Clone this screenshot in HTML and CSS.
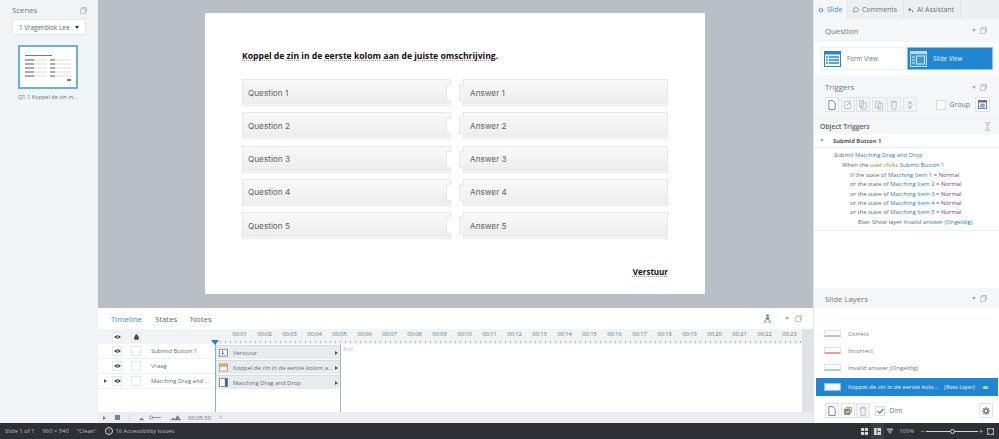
FILE: index.html
```html
<!DOCTYPE html>
<html lang="nl">
<head>
<meta charset="utf-8">
<title>Slide</title>
<link rel="stylesheet" href="styles.css">
</head>
<body>
<div class="app">
  <aside class="scenes">
    <div class="scenes-head"><span>Scenes</span>
      <svg class="dock" viewBox="0 0 9 9"><path d="M2.500 2V.5h6v5H7M.5 2.500h6.500v6h-6.500z" fill="none" stroke="#a9b1b8"/></svg>
    </div>
    <div class="scene-select"><span class="scene-name">1 Vragenblok Lee</span><span class="caret-d"></span></div>
    <div class="thumb">
      <div class="thumb-title"></div>
      <div class="thumb-row"></div><div class="thumb-row"></div><div class="thumb-row"></div><div class="thumb-row"></div><div class="thumb-row"></div>
      <div class="thumb-btn"></div>
    </div>
    <div class="thumb-label">Q1.1 Koppel de zin in...</div>
  </aside>

  <main class="center">
    <div class="stage">
      <section class="slide">
        <h1 class="q-title"><span class="sp">Koppel</span> de <span class="sp">zin</span> in de <span class="sp">eerste</span> <span class="sp">kolom</span> <span class="sp">aan</span> de <span class="sp">juiste</span> <span class="sp">omschrijving</span>.</h1>
        <div class="pairs">
          <div class="pair"><div class="q">Question 1<i class="notch"></i></div><div class="a"><i class="tab"></i>Answer 1</div></div>
          <div class="pair"><div class="q">Question 2<i class="notch"></i></div><div class="a"><i class="tab"></i>Answer 2</div></div>
          <div class="pair"><div class="q">Question 3<i class="notch"></i></div><div class="a"><i class="tab"></i>Answer 3</div></div>
          <div class="pair"><div class="q">Question 4<i class="notch"></i></div><div class="a"><i class="tab"></i>Answer 4</div></div>
          <div class="pair"><div class="q">Question 5<i class="notch"></i></div><div class="a"><i class="tab"></i>Answer 5</div></div>
        </div>
        <div class="submit"><span class="sp">Verstuur</span></div>
      </section>
    </div>

    <section class="timeline">
      <div class="tl-tabs">
        <span class="tl-tab on">Timeline</span><span class="tl-tab">States</span><span class="tl-tab">Notes</span>
        <span class="tl-tools">
          <svg class="person" viewBox="0 0 8 10"><circle cx="4" cy="1.500" r="1.500" fill="#3b86c4"/><path d="M2 3.500h4v3H2z" fill="#6d8ba6"/><path d="M0 7h3v3H0zM5 7h3v3H5z" fill="#b4bbc2"/></svg>
          <i class="caret-s"></i>
          <svg class="dock" viewBox="0 0 9 9"><path d="M2.500 2V.5h6v5H7M.5 2.500h6.500v6h-6.500z" fill="none" stroke="#a9b1b8"/></svg>
        </span>
      </div>
      <div class="ruler-row">
        <div class="ruler-left">
          <span class="ck eye"><svg viewBox="0 0 10 8"><path d="M0 4q5-5 10 0q-5 5-10 0z" fill="#444c54"/><circle cx="5" cy="4" r="1.200" fill="#fff"/></svg></span>
          <span class="ck eye"><svg viewBox="0 0 10 10"><path d="M3 4.500V3a2 2 0 0 1 4 0v1.500M1.500 4.500h7V9h-7z" fill="#444c54" stroke="#444c54"/></svg></span>
        </div>
        <div class="ruler" id="ruler"><i class="playhead"></i></div>
        <div class="sb-top"></div>
      </div>
      <div class="tl-body">
        <div class="tl-rows">
          <div class="tl-row">
            <div class="tl-left"><i class="expander"></i><span class="ck eye"><svg viewBox="0 0 10 8"><path d="M0 4q5-5 10 0q-5 5-10 0z" fill="#444c54"/><circle cx="5" cy="4" r="1.200" fill="#fff"/></svg></span><span class="ck"></span><span class="name">Submid Button 1</span></div>
            <div class="bar"><svg class="bar-ico" viewBox="0 0 10 10"><rect x=".5" y="1.500" width="9" height="7.500" fill="#f8f9fa" stroke="#7c8a96"/><path d="M4 3v4l1-1 1 1" fill="none" stroke="#336fa8"/></svg>Verstuur<i class="bar-arrow"></i></div>
          </div>
          <div class="tl-row">
            <div class="tl-left"><i class="expander"></i><span class="ck eye"><svg viewBox="0 0 10 8"><path d="M0 4q5-5 10 0q-5 5-10 0z" fill="#444c54"/><circle cx="5" cy="4" r="1.200" fill="#fff"/></svg></span><span class="ck"></span><span class="name">Vraag</span></div>
            <div class="bar"><svg class="bar-ico" viewBox="0 0 10 10"><rect x=".5" y="1" width="9" height="8" fill="#f9f4e8" stroke="#9aa0a6"/><path d="M1 1.500h8V4H1z" fill="#ee9b45"/></svg>Koppel de zin in de eerste kolom a...<i class="bar-arrow"></i></div>
          </div>
          <div class="tl-row">
            <div class="tl-left"><i class="expander show"></i><span class="ck eye"><svg viewBox="0 0 10 8"><path d="M0 4q5-5 10 0q-5 5-10 0z" fill="#444c54"/><circle cx="5" cy="4" r="1.200" fill="#fff"/></svg></span><span class="ck"></span><span class="name">Matching Drag and ...</span></div>
            <div class="bar"><svg class="bar-ico" viewBox="0 0 10 10"><rect x=".5" y=".5" width="9" height="9" fill="#fff" stroke="#7c8a96"/><path d="M6.500 .5h3v9h-3z" fill="#2f6fa8"/></svg>Matching Drag and Drop<i class="bar-arrow"></i></div>
          </div>
          <span class="end">End</span>
          <i class="line-start"></i><i class="line-end"></i>
        </div>
        <div class="sb"></div>
      </div>
      <div class="tl-foot">
        <div class="foot-left">
          <i class="play"></i><i class="stop"></i><i class="sep"></i>
          <svg class="zoom-ico" viewBox="0 0 48 8"><path d="M0 7l3-3 3 3zM36 7l3-3 2 2 3-5 4 6z" fill="#79828b"/><circle cx="14" cy="4" r="1.800" fill="#fff" stroke="#79828b"/><path d="M16 4h9" stroke="#79828b"/></svg>
          <span class="time">00:05.00</span>
        </div>
        <div class="foot-right"><i class="left-arrow"></i></div>
      </div>
    </section>
  </main>

  <aside class="props">
    <div class="prop-tabs">
      <span class="ptab on"><svg viewBox="0 0 10 10"><circle cx="5" cy="5" r="2.800" fill="none" stroke="#2f8fd4" stroke-width="2" stroke-dasharray="2 .7"/></svg>Slide</span>
      <span class="ptab com"><svg viewBox="0 0 10 10"><path d="M1 4.500a4 3.500 0 1 1 2 3L1 9z" fill="none" stroke="#5d666e"/></svg>Comments</span>
      <span class="ptab ai"><svg viewBox="0 0 10 10"><path d="M3 1l1 2.500L6 4.500 4 5.500 3 8 2 5.500 0 4.500 2 3.500zM8 5l.6 1.400L10 7l-1.400.6L8 9l-.6-1.400L6 7l1.400-.6z" fill="#5d666e"/></svg>AI Assistant</span>
      <span class="ptab-rest"></span>
    </div>
    <div class="panel-head q-head"><span>Question</span><span class="head-tools"><i class="caret-s"></i><svg class="dock" viewBox="0 0 9 9"><path d="M2.500 2V.5h6v5H7M.5 2.500h6.500v6h-6.500z" fill="none" stroke="#a9b1b8"/></svg></span></div>
    <div class="views">
      <div class="view form">
        <svg viewBox="0 0 17 16"><rect x=".5" y=".5" width="16" height="15" fill="#fff" stroke="#1f86d3"/><path d="M1 1h15v2.500H1z" fill="#1f86d3"/><path d="M5 6h10M5 9h10M5 12h10" stroke="#1f86d3" stroke-width="1.400"/><path d="M2 6h2M2 9h2M2 12h2" stroke="#1f86d3" stroke-width="1.400"/></svg>
        Form View
      </div>
      <div class="view slide-v">
        <svg viewBox="0 0 17 16"><rect x=".5" y=".5" width="16" height="15" fill="#3d97da" stroke="#bcdcf3"/><path d="M1 1h15v2H1z" fill="#bcdcf3"/><rect x="6.500" y="5" width="8" height="8" fill="none" stroke="#d5e9f8"/><path d="M2 6h3M2 9h3M2 12h3" stroke="#d5e9f8"/></svg>
        Slide View
      </div>
    </div>
    <div class="panel-head t-head"><span>Triggers</span><span class="head-tools"><i class="caret-s"></i><svg class="dock" viewBox="0 0 9 9"><path d="M2.500 2V.5h6v5H7M.5 2.500h6.500v6h-6.500z" fill="none" stroke="#a9b1b8"/></svg></span></div>
    <div class="trig-tools">
      <span class="tbtn"><svg viewBox="0 0 10 12"><path d="M1 .5h5l3 3v8H1z" fill="#fff" stroke="#5f676f"/></svg></span>
      <span class="tbtn dim"><svg viewBox="0 0 10 12"><path d="M1 1.500h7v9H1z" fill="#fff" stroke="#aeb5bb"/><path d="M3 7l4-4" stroke="#aeb5bb" stroke-width="1.400"/></svg></span>
      <span class="tbtn dim"><svg viewBox="0 0 10 12"><path d="M.5.500h5v8h-5zM3 3h6v8.500H3z" fill="#f3f4f5" stroke="#aeb5bb"/></svg></span>
      <span class="tbtn dim"><svg viewBox="0 0 10 12"><path d="M.5 1.500h6v8h-6zM4 4h5.500v7.500H4z" fill="#f3f4f5" stroke="#aeb5bb"/></svg></span>
      <span class="tbtn dim"><svg viewBox="0 0 10 12"><path d="M1 2.500h8M3 2.500V1h4v1.500M2 2.500l.6 9h4.800l.6-9" fill="none" stroke="#aeb5bb"/></svg></span>
      <span class="tbtn dim"><svg viewBox="0 0 10 12"><path d="M2 4l3-3 3 3zM2 8l3 3 3-3z" fill="#aeb5bb"/><path d="M1 6h8" stroke="#cfd4d8"/></svg></span>
      <span class="group"><i class="box"></i>Group</span>
      <span class="tbtn last"><svg viewBox="0 0 11 11"><rect x=".5" y=".5" width="10" height="10" fill="#fff" stroke="#5f676f"/><path d="M1 1h9v2H1z" fill="#5f676f"/><rect x="3.500" y="5" width="4" height="3.500" fill="#9dc7e8" stroke="#3d85bf"/></svg></span>
    </div>
    <div class="obj-head"><span>Object Triggers</span><svg viewBox="0 0 7 11"><path d="M0 .5h7M0 10.500h7" stroke="#8d959c"/><path d="M1.500 4L3.500 2 5.500 4zM1.500 7l2 2 2-2z" fill="#8d959c"/></svg></div>
    <div class="obj-name"><i class="caret-s"></i><b>Submid Button 1</b></div>
    <div class="trigger-text">
      <p class="l0">Submit <a>Matching Drag and Drop</a></p>
      <p class="l1">When the <em>user clicks</em> <a>Submit Button 1</a></p>
      <p class="l2">If the state of <a>Matching Item 1</a> = <u>Normal</u></p>
      <p class="l2">or the state of <a>Matching Item 2</a> = <u>Normal</u></p>
      <p class="l2">or the state of <a>Matching Item 3</a> = <u>Normal</u></p>
      <p class="l2">or the state of <a>Matching Item 4</a> = <u>Normal</u></p>
      <p class="l2">or the state of <a>Matching Item 5</a> = <u>Normal</u></p>
      <p class="l3">Else: Show layer <a>Invalid answer (Ongeldig)</a></p>
    </div>
    <div class="trig-space"></div>
    <div class="panel-head l-head"><span>Slide Layers</span><span class="head-tools"><i class="caret-s"></i><svg class="dock" viewBox="0 0 9 9"><path d="M2.500 2V.5h6v5H7M.5 2.500h6.500v6h-6.500z" fill="none" stroke="#a9b1b8"/></svg></span></div>
    <div class="layers">
      <div class="layer"><i class="lthumb green"></i>Correct</div>
      <div class="layer"><i class="lthumb red"></i>Incorrect</div>
      <div class="layer"><i class="lthumb blue"></i>Invalid answer (Ongeldig)</div>
      <div class="layer base"><i class="lthumb base-t"></i><span class="base-name">Koppel de zin in de eerste kolo...</span><em>(Base Layer)</em><svg viewBox="0 0 10 8"><path d="M0 4q5-5 10 0q-5 5-10 0z" fill="#fff"/><circle cx="5" cy="4" r="1.200" fill="#1f86d3"/></svg></div>
    </div>
    <div class="layer-tools">
      <span class="tbtn"><svg viewBox="0 0 10 12"><path d="M1 .5h5l3 3v8H1z" fill="#fff" stroke="#5f676f"/></svg></span>
      <span class="tbtn"><svg viewBox="0 0 12 12"><path d="M3 .5h8v8" fill="none" stroke="#5f676f"/><rect x="1" y="3" width="8" height="8" fill="#6fa65a" stroke="#5f676f"/><path d="M3 7l2 2 3-4" fill="none" stroke="#fff"/></svg></span>
      <span class="tbtn dim"><svg viewBox="0 0 10 12"><path d="M1 2.500h8M3 2.500V1h4v1.500M2 2.500l.6 9h4.800l.6-9" fill="none" stroke="#aeb5bb"/></svg></span>
      <span class="dim-check"><i class="box checked"><svg viewBox="0 0 10 8"><path d="M1 4l3 3 5-6" fill="none" stroke="#1f86d3" stroke-width="1.600"/></svg></i>Dim</span>
      <span class="tbtn gear"><svg viewBox="0 0 10 10"><circle cx="5" cy="5" r="2.500" fill="none" stroke="#6b737a" stroke-width="1.800"/><path d="M5 0v2M5 8v2M0 5h2M8 5h2M1.500 1.500l1.400 1.400M7.100 7.100l1.400 1.400M1.500 8.500l1.400-1.400M7.100 2.900l1.400-1.400" stroke="#6b737a" stroke-width="1.300"/></svg></span>
    </div>
  </aside>

  <footer class="status">
    <span class="st">Slide 1 of 1</span><span class="st">960 × 540</span><span class="st">"Clean"</span>
    <span class="st a11y"><i class="ring">!</i>16 Accessibility Issues</span>
    <span class="st-right">
      <svg class="st-ico s-grid" viewBox="0 0 9 9"><path d="M0 0h4v4H0zM5 0h4v4H5zM0 5h4v4H0zM5 5h4v4H5z" fill="#d4d6d9"/></svg>
      <span class="st-active"><svg class="st-ico" viewBox="0 0 9 9"><path d="M0 0h9v9H0z" fill="#d4d6d9"/><path d="M4 1v7M4 4.500h4" stroke="#2f3036"/></svg></span>
      <svg class="st-ico s-fun" viewBox="0 0 9 9"><path d="M0 0h9v3H0zM2 4h5v2H2zM4 6h1v3H4z" fill="#a8abaf"/></svg>
      <span class="pct">100%</span>
      <span class="zm minus">−</span>
      <span class="slider"><i></i></span>
      <span class="zm plus">+</span>
      <svg class="st-ico fit" viewBox="0 0 11 11"><rect x=".5" y=".5" width="10" height="10" fill="none" stroke="#d4d6d9"/><path d="M2 2l2 0-2 2zM9 2v2l-2-2zM2 9V7l2 2zM9 9H7l2-2z" fill="#d4d6d9"/></svg>
    </span>
  </footer>
</div>
<script src="ruler.js"></script>
</body>
</html>
```

FILE: ruler.js
```js
var r = document.getElementById('ruler');
for (var i = 1; i <= 23; i++) {
  var t = document.createElement('span');
  t.className = 'tick';
  t.textContent = '00:' + (i < 10 ? '0' + i : i);
  r.appendChild(t);
}
```

FILE: styles.css
```css
* { box-sizing: border-box; }
html, body { margin: 0; padding: 0; height: 100%; overflow: hidden; }
body { font-family: "Open Sans", "Noto Sans", sans-serif; font-size: 7px; color: #5c6670; }
p, h1 { margin: 0; }
i { font-style: normal; }
svg { display: block; }

.app {
  width: 999px; height: 439px;
  display: grid;
  grid-template-columns: 98px 715px 186px;
  grid-template-rows: 423px 16px;
}

/* scenes */
.scenes { background: #f1f4f7; padding: 4px 11px 0 12px; }
.scenes-head { display: flex; justify-content: space-between; align-items: center; height: 12px; margin-bottom: 3px; font-size: 7.800px; color: #6d767e; }
.dock { width: 7px; height: 7px; flex: none; }
.scene-select {
  display: flex; align-items: center; justify-content: space-between;
  width: 74px; height: 16px; padding: 0 6px 0 6px;
  background: #fff; border: 1px solid #e3e7ea; border-radius: 1px;
  font-size: 6.300px; color: #5f676f;
}
.scene-name { white-space: nowrap; }
.caret-d { width: 0; height: 0; border: 2.500px solid transparent; border-top: 3px solid #333; border-bottom: 0; }
.thumb {
  width: 60px; height: 44px; margin: 10px 0 0 6px; padding: 8px 0 0 5px;
  background: #fff; border: 2px solid #6daee3; position: relative;
}
.thumb-title { width: 27px; height: 1px; margin-bottom: 3px; background: #777; }
.thumb-row { width: 46px; height: 2px; margin-bottom: 2px; background: linear-gradient(90deg, #aaa 0 9px, #eee 9px 22px, #fff 22px 25px, #aaa 25px 30px, #eee 30px); }
.thumb-btn { position: absolute; right: 5px; bottom: 6px; width: 4px; height: 2px; background: #777; }
.thumb-label { margin-top: 4px; width: 80px; margin-left: 6px; font-size: 5.600px; white-space: nowrap; color: #626b73; }

/* center */
.center { display: flex; flex-direction: column; background: #b8bfc6; min-width: 0; }
.stage { height: 308px; padding: 13px 0 0 107px; }
.slide {
  width: 500px; height: 281px; background: #fff; padding: 37px 37px 0 37px;
  display: flex; flex-direction: column;
}
.q-title { font-family: "Open Sans", sans-serif; font-weight: 700; font-size: 8.600px; line-height: 13px; color: #111; height: 29px; white-space: nowrap; }
.sp { text-decoration: underline dotted #e8706a 1px; text-underline-offset: 1px; }
.pairs { display: flex; flex-direction: column; gap: 6.300px; }
.pair { display: flex; height: 27px; gap: 8px; }
.q, .a {
  height: 27px; display: flex; align-items: center; position: relative;
  background: linear-gradient(#f9f9f9, #ececec);
  border: 1px solid #e8e8e8;
  box-shadow: inset 0 -1px 0 #f8f8f8;
  font-family: Inter, "Open Sans", sans-serif; font-size: 8.200px; color: #616161;
}
.q { width: 209px; padding-left: 5px; }
.a { width: 205px; margin-left: 4px; padding-left: 6px; }
.notch { position: absolute; right: -1px; top: 4px; width: 5px; height: 17px; background: #fff; border: 1px solid #e8e8e8; border-right: 0; }
.tab { position: absolute; left: -5px; top: 4px; width: 5px; height: 17px; background: #f4f4f4; border: 1px solid #e8e8e8; border-right: 0; }
.submit { margin-top: 27px; align-self: flex-end; font-family: "Open Sans", sans-serif; font-weight: 700; font-size: 8px; color: #111; line-height: 12px; }

/* timeline */
.timeline { height: 115px; background: #fff; display: flex; flex-direction: column; }
.tl-tabs { height: 21px; display: flex; align-items: center; padding: 0 11px 0 13px; gap: 13px; font-size: 7.800px; color: #5c6670; position: relative; }
.tl-tab.on { color: #2b8fd8; }
.tl-tools { margin-left: auto; display: flex; align-items: center; gap: 6px; }
.person { width: 7px; height: 9px; margin-right: 8px; }
.caret-s { display: inline-block; width: 0; height: 0; border: 2.500px solid transparent; border-top: 3px solid #a6adb4; border-bottom: 0; flex: none; }
.ruler-row { height: 15px; display: flex; background: #f1f4f7; }
.ruler-left { width: 117px; display: flex; align-items: center; gap: 9px; padding-left: 14px; }
.ck { width: 10px; height: 10px; flex: none; background: #fff; border: 1px solid #e4e8eb; display: flex; align-items: center; justify-content: center; }
.ck svg { width: 7px; height: 6px; }
.ruler {
  position: relative; flex: 1; display: flex; padding-left: 12.500px;
  background: repeating-linear-gradient(90deg, #aab1b7 0 1px, transparent 1px 5px) 0 12px / 100% 2px no-repeat;
}
.playhead { position: absolute; left: -4px; bottom: -1px; width: 0; height: 0; border: 4px solid transparent; border-top: 5px solid #1f86d3; border-bottom: 0; z-index: 2; }
.tick { width: 25px; flex: none; text-align: center; font-size: 5.800px; line-height: 10px; color: #6a737b; }
.sb-top { width: 11px; background: #dfe3e6; }
.tl-body { flex: 1; display: flex; min-height: 0; }
.tl-rows { flex: 1; position: relative; }
.tl-row { height: 15px; display: flex; position: relative; }
.tl-left { width: 117px; display: flex; align-items: center; border-bottom: 1px solid #eef1f3; flex: none; }
.expander { width: 14px; flex: none; }
.expander.show::before { content: ""; display: block; width: 0; height: 0; margin-left: 6px; border: 2px solid transparent; border-left: 3px solid #555; border-right: 0; }
.tl-left .ck { margin-right: 9px; }
.name { font-size: 5.900px; color: #626b73; white-space: nowrap; margin-left: 1px; }
.bar { width: 125px; height: 14px; margin-top: 1px; background: #e7ebee; border-top: 1px solid #d6dbdf; display: flex; align-items: center; padding-left: 4px; font-size: 5.950px; color: #626b73; white-space: nowrap; position: relative; }
.bar-ico { width: 9px; height: 9px; margin-right: 5px; flex: none; }
.bar-arrow { position: absolute; right: 2px; top: 5px; width: 0; height: 0; border: 2px solid transparent; border-left: 3px solid #555; border-right: 0; }
.end { position: absolute; left: 245px; top: 1px; font-size: 5.500px; color: #b5bcc2; }
.line-start { position: absolute; left: 117px; top: 0; bottom: 0; width: 1px; background: #7fb4de; }
.line-end { position: absolute; left: 242px; top: 0; bottom: 0; width: 1px; background: #aab3ba; }
.sb { width: 11px; background: #dfe3e6; }
.tl-foot { height: 11px; display: flex; background: #eaeef1; }
.foot-left { width: 117px; display: flex; align-items: center; padding-left: 5px; }
.play { width: 0; height: 0; border: 2.500px solid transparent; border-left: 3px solid #79828b; border-right: 0; margin-right: 9px; }
.stop { width: 5px; height: 5px; background: #79828b; margin-right: 9px; }
.sep { width: 1px; height: 8px; background: #d5dade; margin-right: 8px; }
.zoom-ico { width: 44px; height: 7px; }
.time { margin-left: auto; margin-right: 4px; font-size: 5.800px; color: #626b73; }
.foot-right { flex: 1; padding: 3px 0 0 4px; }
.left-arrow { display: block; width: 0; height: 0; border: 2.500px solid transparent; border-right: 3px solid #c3c9ce; border-left: 0; }

/* properties */
.props { background: #fff; border-left: 1px solid #e2e6e9; display: flex; flex-direction: column; min-width: 0; position: relative; }
.prop-tabs { height: 19px; display: flex; background: #eceff1; flex: none; }
.ptab { display: flex; align-items: center; gap: 3px; padding-left: 4px; font-size: 6.900px; color: #667079; border-right: 1px solid #e2e6e9; white-space: nowrap; width: 34px; }
.ptab.com { width: 56px; padding-left: 5px; }
.ptab.ai { width: 57px; }
.ptab svg { width: 6px; height: 6px; flex: none; }
.ptab.on { background: #f4f6f8; color: #2b8fd8; }
.ptab-rest { flex: 1; }
.panel-head { display: flex; justify-content: space-between; align-items: center; background: #f4f6f8; font-size: 7.800px; color: #6d767e; padding: 0 12px 0 11px; flex: none; }
.head-tools { display: flex; align-items: center; gap: 4px; }
.q-head { height: 23px; }
.views { height: 33px; display: flex; flex: none; padding: 5px 0 0; }
.view { height: 23px; display: flex; align-items: center; gap: 6px; padding-left: 2px; font-size: 6.300px; }
.view svg { width: 17px; height: 16px; flex: none; }
.view.form { margin-left: 7px; width: 85px; color: #6e7780; border: 1px solid #edf0f2; }
.view.slide-v { width: 86px; background: #1f86d3; color: #e8f3fb; margin-left: 1px; padding-left: 3px; box-shadow: 0 0 0 1px #8cc3ea inset; }
.t-head { height: 22px; padding-top: 2px; }
.trig-tools { height: 21px; background: #f4f6f8; display: flex; align-items: flex-start; padding: 0 9px 0 11px; gap: 1.600px; flex: none; }
.tbtn { width: 14px; height: 15px; flex: none; display: flex; align-items: center; justify-content: center; background: #fff; border: 1px solid #dfe3e6; }
.tbtn svg { width: 8px; height: 10px; }
.tbtn.dim { background: #f1f3f4; }
.group { display: flex; align-items: center; margin-left: auto; gap: 4px; font-size: 6.900px; color: #6e7780; height: 15px; }
.box { width: 10px; height: 10px; background: #fff; border: 1px solid #d8dde1; display: flex; align-items: center; justify-content: center; flex: none; }
.tbtn.last { margin-left: 3.400px; width: 15px; }
.tbtn.last svg { width: 9px; height: 9px; }
.obj-head { height: 16px; display: flex; justify-content: space-between; align-items: center; background: #f4f6f8; border-top: 1px solid #e9ecef; font-weight: 600; font-size: 6.800px; color: #5a636b; padding: 0 9px 0 6px; flex: none; }
.obj-head svg { width: 5px; height: 9px; }
.obj-name { height: 14px; display: flex; align-items: center; gap: 9px; padding-left: 6px; border-bottom: 1px solid #edf0f2; flex: none; font-size: 5.800px; color: #4d555d; }
.obj-name b { font-weight: 700; }
.trigger-text { padding-top: 3px; height: 83px; border-bottom: 1px solid #edf0f2; flex: none; font-size: 5.900px; line-height: 9.400px; color: #5d666e; white-space: nowrap; }
.trigger-text a { color: #2e7bae; }
.trigger-text em { font-style: normal; color: #8c8a2f; }
.trigger-text u { text-decoration: none; color: #7a3b6e; }
.l0 { padding-left: 20px; margin-bottom: 1px; }
.l1 { padding-left: 28px; }
.l2 { padding-left: 36px; }
.l3 { padding-left: 44px; }
.trig-space { flex: 1; }
.l-head { height: 21px; }
.layers { padding-top: 16px; flex: none; }
.layer { height: 17px; display: flex; align-items: center; padding-left: 10px; gap: 7px; font-size: 6px; color: #6e7780; white-space: nowrap; }
.lthumb { width: 17px; height: 7px; background: #fff; border: 1px solid #dfe3e6; flex: none; }
.lthumb.green { border-bottom: 2px solid #a3d79e; }
.lthumb.red { border-bottom: 2px solid #eba08f; }
.lthumb.blue { border-bottom: 2px solid #a5cfee; }
.layer.base { margin: 2px 1px 0 2px; height: 18px; background: #1f86d3; color: #eaf4fb; padding-left: 8px; gap: 7px; }
.lthumb.base-t { height: 8px; background: #f4f8fb; border-color: #8fc3e9; }
.base-name { width: 89px; flex: none; }
.layer.base em { font-size: 5.800px; width: 34px; flex: none; }
.layer.base svg { width: 7px; height: 5px; margin-left: -3px; flex: none; }
.layer-tools { height: 27px; padding: 7px 6px 0 11px; display: flex; gap: 1.600px; flex: none; }
.dim-check { display: flex; align-items: center; gap: 4px; margin-left: 3.400px; height: 15px; font-size: 6.900px; color: #6e7780; }
.box.checked svg { width: 7px; height: 6px; }
.tbtn.gear { margin-left: auto; }
.tbtn.gear svg { width: 8px; height: 8px; }

/* status */
.status { grid-column: 1 / -1; background: #2f3036; color: #b9bcc0; display: flex; align-items: center; padding: 0 5px; font-size: 5.800px; }
.st { margin-right: 8px; white-space: nowrap; }
.a11y { display: flex; align-items: center; gap: 2px; margin-left: 1px; }
.ring { width: 8px; height: 8px; border-radius: 50%; border: 1px solid #d4d6d9; display: flex; align-items: center; justify-content: center; font-size: 5px; line-height: 1; color: #d4d6d9; }
.st-right { margin-left: auto; display: flex; align-items: center; }
.st-ico { width: 7px; height: 7px; flex: none; }
.s-grid { margin-right: 3px; }
.st-active { width: 13px; height: 16px; margin-right: 3px; background: #3d3f45; display: flex; align-items: center; justify-content: center; }
.s-fun { width: 6px; margin-right: 6px; }
.pct { margin-right: 7px; }
.zm { color: #d4d6d9; font-size: 7px; line-height: 1; }
.minus { margin-right: 1px; }
.plus { margin-left: 1px; margin-right: 4px; }
.slider { width: 52px; height: 1px; background: #d4d6d9; position: relative; }
.slider i { position: absolute; left: 24px; top: -2px; width: 5px; height: 5px; border-radius: 50%; border: 1px solid #d4d6d9; background: #2f3036; }
```
